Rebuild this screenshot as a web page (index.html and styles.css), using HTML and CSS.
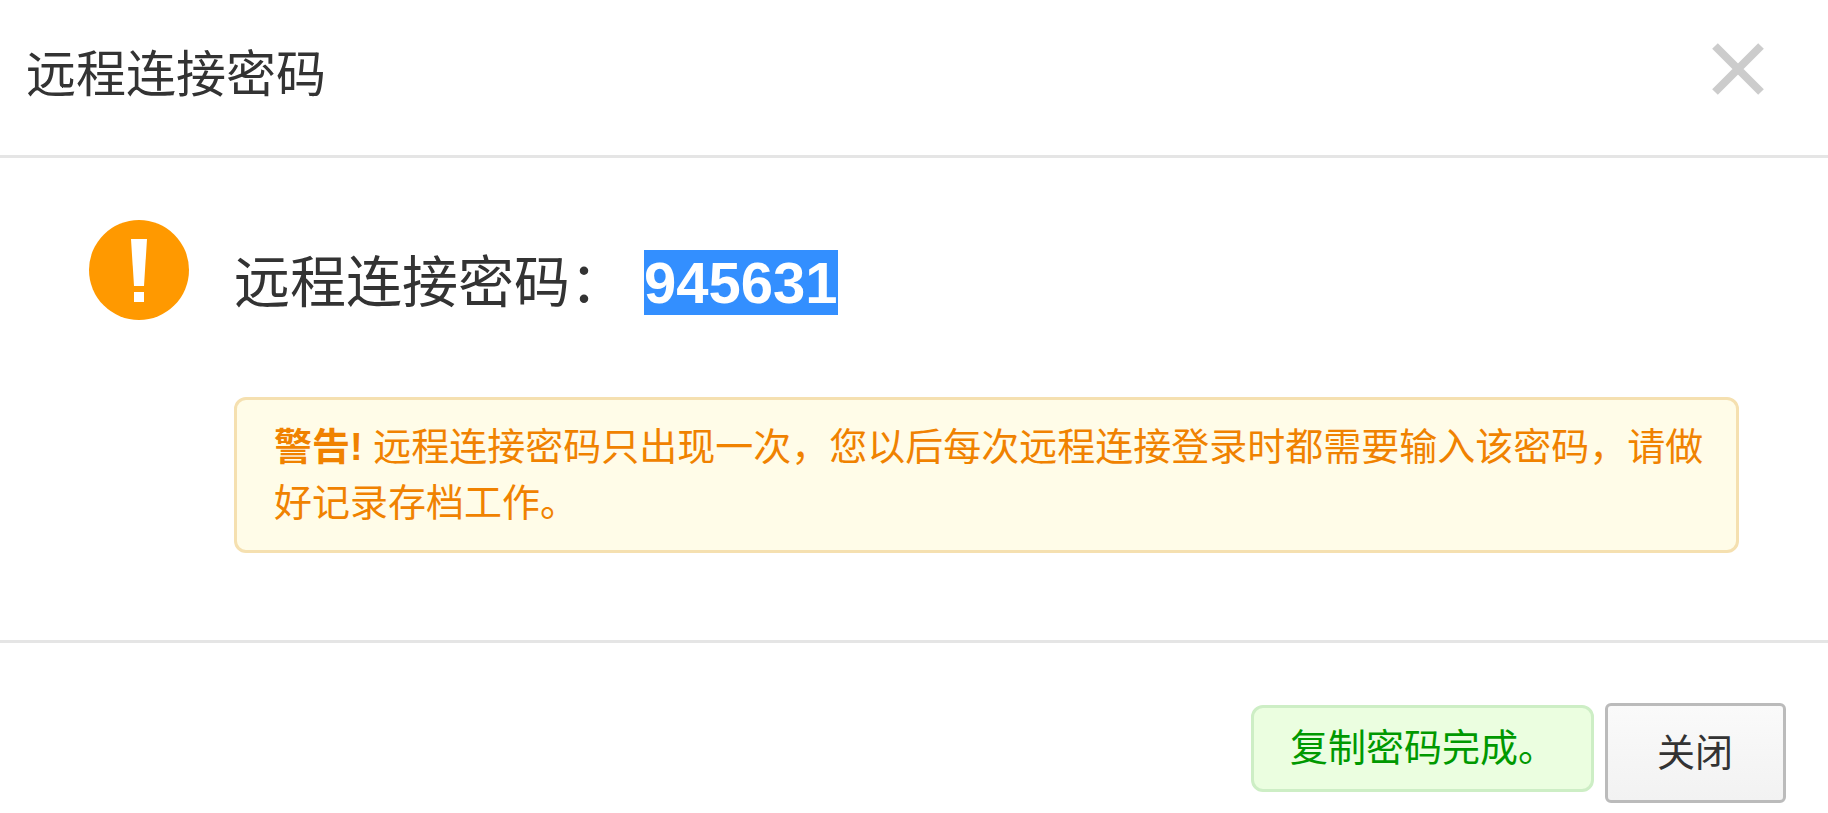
FILE: index.html
```html
<!DOCTYPE html>
<html lang="zh-CN">
<head>
    <meta charset="UTF-8">
    <meta name="viewport" content="width=device-width, initial-scale=1.0">
    <title>远程连接密码</title>
    <link rel="stylesheet" href="styles.css">
</head>
<body>
    <div class="dialog" role="dialog" aria-labelledby="dialogTitle">
        <div class="dialog-header">
            <h2 id="dialogTitle">远程连接密码</h2>
            <button type="button" class="close" aria-label="关闭">
                <svg width="52" height="52" viewBox="0 0 52 52">
                    <path d="M3 3L49 49M49 3L3 49" stroke="#ccc" stroke-width="8" fill="none"/>
                </svg>
            </button>
        </div>

        <div class="dialog-body">
            <svg class="icon" width="100" height="100" viewBox="0 0 100 100">
                <circle cx="50" cy="50" r="50" fill="#f90"/>
                <path d="M42 19H58L55 66H45Z" fill="#fff"/>
                <rect x="45" y="72" width="10" height="10" fill="#fff"/>
            </svg>
            <div class="content">
                <p class="password">远程连接密码：<strong class="selected">945631</strong></p>
                <div class="alert alert-warning">
                    <b>警告!</b> 远程连接密码只出现一次，您以后每次远程连接登录时都需要输入该密码，请做好记录存档工作。
                </div>
            </div>
        </div>

        <div class="dialog-footer">
            <div class="alert alert-success" role="status">复制密码完成。</div>
            <button type="button" class="btn">关闭</button>
        </div>
    </div>
</body>
</html>
```
FILE: styles.css
```css
body {
    margin: 0;
    background: #fff;
    color: #333;
    font-family: "Liberation Sans", "Noto Sans CJK SC", sans-serif;
    font-size: 38px;
    line-height: 56px;
}
.dialog-header {
    display: flex;
    justify-content: space-between;
    align-items: flex-start;
    padding: 43px 64px 48px 26px;
    border-bottom: 3px solid #e5e5e5;
}
.dialog-header h2 {
    margin: 0;
    font-size: 50px;
    font-weight: normal;
    line-height: 64px;
}
.close {
    padding: 0;
    border: none;
    background: none;
    cursor: pointer;
}
.close svg {
    display: block;
}
.dialog-body {
    display: flex;
    align-items: flex-start;
    gap: 45px;
    padding: 62px 89px 87px;
}
.icon {
    flex: none;
}
.content {
    flex: 1;
    padding-top: 30px;
}
.password {
    display: flex;
    align-items: center;
    gap: 18px;
    margin: 0 0 82px;
    font-size: 56px;
    line-height: 65px;
}
.selected {
    background: #338fff;
    color: #fff;
    font-size: 58px;
}
.alert {
    border: 3px solid;
    border-radius: 12px;
}
.alert-warning {
    padding: 19px 32px 19px 37px;
    border-color: #f5e0b0;
    background: #fffce8;
    color: #f08200;
}
.dialog-footer {
    display: flex;
    justify-content: flex-end;
    align-items: flex-start;
    gap: 11px;
    padding: 60px 42px 10px;
    border-top: 3px solid #e5e5e5;
}
.alert-success {
    margin-top: 2px;
    padding: 12px 35px 13px 36px;
    border-color: #cdeec5;
    background: #ebfee0;
    color: #090;
}
.btn {
    padding: 19px 50px 19px 49px;
    border: 3px solid #bbb;
    border-radius: 6px;
    background: linear-gradient(#fafafa, #f2f2f2);
    color: #333;
    font: inherit;
    cursor: pointer;
}
```
